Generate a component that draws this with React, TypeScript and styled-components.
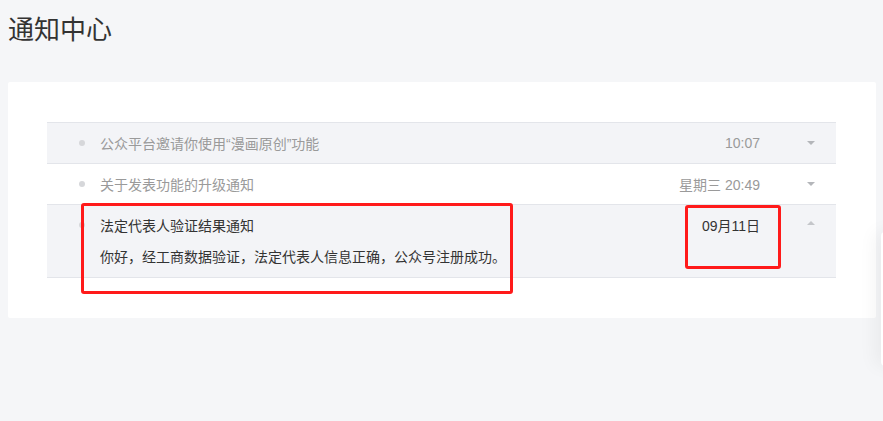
import React from "react";
import styled, { createGlobalStyle } from "styled-components";

const GlobalStyle = createGlobalStyle`
  html, body {
    margin: 0;
    padding: 0;
    background: #f5f6f8;
    overflow: hidden;
  }
  body {
    font-family: "Liberation Sans", "Noto Sans CJK SC", sans-serif;
    color: #333;
  }
`;

const Page = styled.div`
  position: relative;
  width: 883px;
  height: 421px;
  padding: 0 7px 0 8px;
  box-sizing: border-box;
`;

const Title = styled.h1`
  margin: 0;
  padding-top: 12px;
  height: 82px;
  box-sizing: border-box;
  font-size: 26px;
  line-height: 32px;
  font-weight: 400;
  color: #333;
  font-family: "Noto Sans CJK SC", sans-serif;
`;

const Card = styled.section`
  background: #fff;
  padding: 40px 40px 40px 39px;
  border-radius: 2px;
`;

const List = styled.ul`
  list-style: none;
  margin: 0;
  padding: 0;
  border-top: 1px solid #e3e5ea;
`;

const Item = styled.li<{ $shaded: boolean }>`
  background: ${(p) => (p.$shaded ? "#f3f4f7" : "#fff")};
  border-bottom: 1px solid #e3e5ea;
`;

const Head = styled.div`
  display: flex;
  align-items: center;
  height: 40px;
  padding: 0 21px 0 32px;
`;

const Dot = styled.span`
  width: 6px;
  height: 6px;
  border-radius: 50%;
  background: #d6d7da;
  flex: none;
  margin-right: 15px;
`;

const ItemTitle = styled.span<{ $read: boolean }>`
  flex: 1;
  font-size: 14px;
  color: ${(p) => (p.$read ? "#9a9a9a" : "#333")};
  white-space: nowrap;
`;

const Time = styled.span<{ $read: boolean }>`
  font-size: 14px;
  color: ${(p) => (p.$read ? "#9a9a9a" : "#333")};
  margin-right: 47px;
  white-space: nowrap;
`;

const Arrow = styled.span<{ $up: boolean }>`
  width: 0;
  height: 0;
  flex: none;
  border-left: 4px solid transparent;
  border-right: 4px solid transparent;
  ${(p) =>
    p.$up
      ? "border-bottom: 4px solid #c4c6ca; margin-top: -4px;"
      : "border-top: 4px solid #b4b6ba;"}
`;

const Body = styled.p`
  margin: 0;
  padding: 0 0 8px 53px;
  font-size: 14px;
  line-height: 24px;
  color: #333;
`;

const Mark = styled.div`
  position: absolute;
  border: 3px solid #ff1a1a;
  border-radius: 3px;
  box-sizing: border-box;
  pointer-events: none;
`;

const SidePanel = styled.div`
  position: absolute;
  left: 881px;
  top: 232px;
  width: 40px;
  height: 134px;
  background: #fff;
  border-radius: 4px;
  box-shadow: -6px 0 18px rgba(0, 0, 0, 0.05);
`;

type Notice = {
  title: string;
  time: string;
  read: boolean;
  body?: string;
};

const notices: Notice[] = [
  { title: "公众平台邀请你使用“漫画原创”功能", time: "10:07", read: true },
  { title: "关于发表功能的升级通知", time: "星期三 20:49", read: true },
  {
    title: "法定代表人验证结果通知",
    time: "09月11日",
    read: false,
    body: "你好，经工商数据验证，法定代表人信息正确，公众号注册成功。",
  },
];

export default function App() {
  return (
    <>
      <GlobalStyle />
      <Page>
        <Title>通知中心</Title>
        <Card>
          <List>
            {notices.map((n, i) => (
              <Item key={i} $shaded={i !== 1}>
                <Head>
                  <Dot />
                  <ItemTitle $read={n.read}>{n.title}</ItemTitle>
                  <Time $read={n.read}>{n.time}</Time>
                  <Arrow $up={!!n.body} />
                </Head>
                {n.body && <Body>{n.body}</Body>}
              </Item>
            ))}
          </List>
        </Card>
        <Mark style={{ left: 81, top: 203, width: 432, height: 91 }} />
        <Mark style={{ left: 685, top: 205, width: 96, height: 64 }} />
        <SidePanel />
      </Page>
    </>
  );
}
